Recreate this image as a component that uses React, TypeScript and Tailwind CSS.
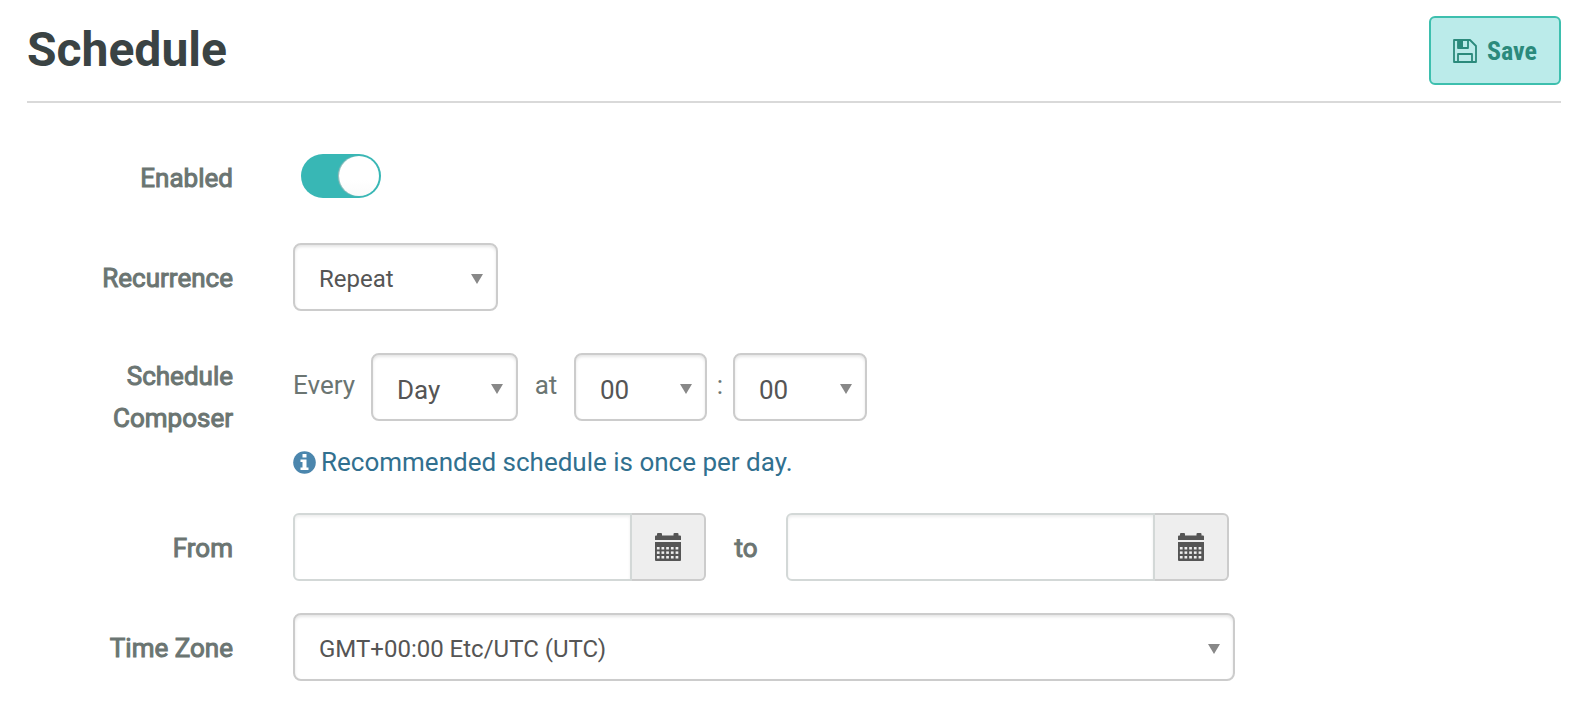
import { useState } from "react";
import type { ReactNode, SelectHTMLAttributes } from "react";
import { clsx } from "clsx";

const LABEL = "text-[26px] leading-[42px] text-[#6b7572] [-webkit-text-stroke:1px_#6b7572]";

function FloppyIcon() {
  return (
    <svg width="24" height="24" viewBox="0 0 24 24" fill="none" stroke="currentColor" strokeWidth="1.8" strokeLinejoin="round" aria-hidden="true">
      <path d="M1 1h16l6 6v16H1z" />
      <path d="M5 23v-8h14v8M5 1v8h10V1" />
      <path d="M5 1h5v8H5z" fill="currentColor" stroke="none" />
    </svg>
  );
}

function CalendarIcon() {
  const columns = [1.9, 6.5, 11.2, 15.9, 20.6];
  return (
    <svg width="26" height="28" viewBox="0 0 26 28" fill="currentColor" aria-hidden="true">
      <path d="M0 7V3.500a1 1 0 0 1 1-1h1V1a1 1 0 0 1 1-1h3a1 1 0 0 1 1 1v1.500h11.500V1a1 1 0 0 1 1-1h3a1 1 0 0 1 1 1v1.500H25a1 1 0 0 1 1 1V7z" />
      <path d="M0 9h26v18a1 1 0 0 1-1 1H1a1 1 0 0 1-1-1z" />
      {[14, 18.4, 23].map((y) =>
        columns.map((x) => <rect key={`${x}-${y}`} x={x} y={y} width="2.7" height="2.500" fill="#eee" />)
      )}
    </svg>
  );
}

function InfoIcon() {
  return (
    <svg className="shrink-0 text-[#4b86ad]" width="23" height="23" viewBox="0 0 23 23" aria-hidden="true">
      <circle cx="11.500" cy="11.500" r="11.300" fill="currentColor" />
      <path d="M9.500 3h4v3.500h-4zM7.500 8.500h6v8h2V19h-8v-2.500h2V11h-2z" fill="#fff" />
    </svg>
  );
}

interface SelectProps extends SelectHTMLAttributes<HTMLSelectElement> {
  options: string[];
  wrapperClass: string;
}

function Select({ options, wrapperClass, className, ...props }: SelectProps) {
  return (
    <div className={clsx("relative", wrapperClass)}>
      <select
        className={clsx(
          "block h-[68px] w-full appearance-none rounded-lg border-2 border-[#ccc] bg-white pl-6 pr-10 text-[#555] shadow-[inset_0_2px_3px_rgba(0,0,0,0.1)]",
          className
        )}
        {...props}
      >
        {options.map((option) => (
          <option key={option}>{option}</option>
        ))}
      </select>
      <svg className="pointer-events-none absolute right-[15px] top-[31px]" width="12" height="10" viewBox="0 0 12 10" aria-hidden="true">
        <path d="M0 0h12L6 10z" fill="#888" />
      </svg>
    </div>
  );
}

function DateInput({ id, label, className }: { id: string; label: string; className: string }) {
  return (
    <div className={clsx("flex h-[68px] min-w-0", className)}>
      <input
        id={id}
        type="text"
        className="min-w-0 flex-1 rounded-l-md border-2 border-[#d3d8d7] px-6 text-[26px] text-[#555] shadow-[inset_0_2px_3px_rgba(0,0,0,0.07)]"
      />
      <button
        type="button"
        aria-label={`Pick ${label} date`}
        className="flex w-[74px] items-center justify-center rounded-r-md border-2 border-l-0 border-[#ccc] bg-[#eee] text-[#555]"
      >
        <CalendarIcon />
      </button>
    </div>
  );
}

function Row({ label, htmlFor, labelClass = "pt-[14px]", children }: { label: string; htmlFor: string; labelClass?: string; children: ReactNode }) {
  return (
    <div className="grid grid-cols-[206px_minmax(0,1fr)] gap-x-[60px]">
      <label htmlFor={htmlFor} className={clsx("pl-16 text-right", LABEL, labelClass)}>
        {label}
      </label>
      <div>{children}</div>
    </div>
  );
}

export default function App() {
  const [enabled, setEnabled] = useState(true);

  return (
    <main className="bg-white pb-8 pl-[27px] pr-[15px] font-['Roboto',sans-serif]">
      <header className="flex items-start justify-between border-b-2 border-[#d9d9d9] pb-4 pt-4">
        <h1 className="text-[48px] font-bold leading-[68px] text-[#3a4344]">Schedule</h1>
        <button
          type="button"
          className="flex h-[69px] w-[132px] items-center justify-center gap-[10px] rounded-md border-2 border-[#3dbfae] bg-[#bbebea] font-['Roboto_Condensed','Liberation_Sans_Narrow',sans-serif] text-[26px] font-bold text-[#2b8a7c]"
        >
          <FloppyIcon />
          <span className="pt-[2px]">Save</span>
        </button>
      </header>

      <form className="pt-10">
        <div className="mb-[44px]">
          <Row label="Enabled" htmlFor="enabled">
            <label className="ml-2 mt-[11px] flex h-11 w-20 cursor-pointer rounded-full bg-[#c5cccb] p-[2px] has-checked:justify-end has-checked:bg-[#38b7b5]">
              <input
                id="enabled"
                type="checkbox"
                role="switch"
                className="sr-only"
                checked={enabled}
                onChange={(e) => setEnabled(e.target.checked)}
              />
              <span className="size-10 rounded-full bg-linear-to-b from-white from-60% to-[#fafafa] shadow-[-1px_0_1px_rgba(190,190,190,0.9)]" />
            </label>
          </Row>
        </div>

        <div className="mb-[42px]">
          <Row label="Recurrence" htmlFor="recurrence">
            <Select id="recurrence" options={["Repeat", "Once"]} wrapperClass="w-[205px]" className="pt-1 text-2xl" />
          </Row>
        </div>

        <div className="mb-[30px]">
          <Row label="Schedule Composer" htmlFor="interval" labelClass="pt-[2px]">
            <div className="flex items-start text-[26px] leading-[42px] text-[#6b7572]">
              <span className="mt-[11px] w-[78px]">Every</span>
              <Select id="interval" options={["Day", "Week", "Month"]} wrapperClass="w-[147px]" className="pt-[6px]" />
              <span className="mt-[11px] w-14 text-center">at</span>
              <Select aria-label="Hour" options={["00", "06", "12", "18"]} wrapperClass="w-[133px]" className="pt-[6px]" />
              <span className="mt-[11px] w-[26px] text-center">:</span>
              <Select aria-label="Minute" options={["00", "15", "30", "45"]} wrapperClass="w-[134px]" className="pt-[6px]" />
            </div>
            <p className="mt-5 flex items-center gap-[5px] text-[26px] leading-[42px] text-[#31708f]">
              <InfoIcon />
              Recommended schedule is once per day.
            </p>
          </Row>
        </div>

        <div className="mb-8">
          <Row label="From" htmlFor="from">
            <div className="flex">
              <DateInput id="from" label="From" className="w-[413px]" />
              <label htmlFor="to" className={clsx("w-20 shrink-0 pt-[14px] text-center", LABEL)}>
                to
              </label>
              <DateInput id="to" label="To" className="w-[443px]" />
            </div>
          </Row>
        </div>

        <Row label="Time Zone" htmlFor="timezone">
          <Select id="timezone" options={["GMT+00:00 Etc/UTC (UTC)"]} wrapperClass="max-w-[942px]" className="pt-1 text-2xl" />
        </Row>
      </form>
    </main>
  );
}
